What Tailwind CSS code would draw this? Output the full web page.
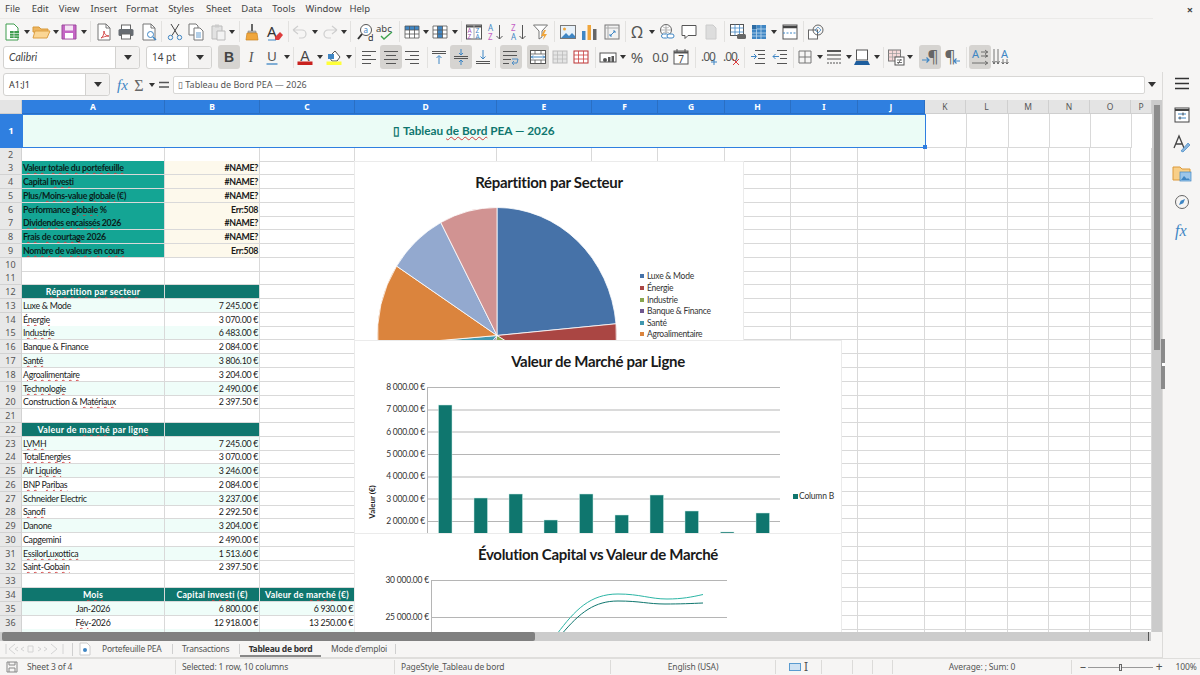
<!doctype html>
<html>
<head>
<meta charset="utf-8">
<script src="https://cdn.jsdelivr.net/npm/@tailwindcss/browser@4"></script>
</head>
<body class="w-[1200px] h-[675px] overflow-hidden bg-[#f6f5f4] text-[#333] font-['Noto_Sans',sans-serif] flex flex-col">

<div class="h-[18px] flex items-center text-[9.5px] text-[#444] relative">
  <span class="ml-[5px]">File</span><span class="ml-[11.5px]">Edit</span><span class="ml-[10px]">View</span><span class="ml-[11px]">Insert</span><span class="ml-[9px]">Format</span><span class="ml-[10px]">Styles</span><span class="ml-[12px]">Sheet</span><span class="ml-[10px]">Data</span><span class="ml-[10px]">Tools</span><span class="ml-[10px]">Window</span><span class="ml-[8px]">Help</span>
  <span class="ml-auto mr-[7px] text-[11px] font-bold leading-none">×</span>
</div>
<div id="tb1" class="h-[26px] flex items-center border-t border-[#ebeae8] mr-[47px]"></div>
<div class="h-[28px] flex items-center pb-[2px]">
  <div class="ml-[3px] w-[137px] h-[23px] flex bg-white border border-[#d3d2d0] rounded-[3px]">
    <span class="flex-1 pl-[5px] text-[10.5px] italic leading-[21px] text-[#444] font-['Lato',sans-serif]">Calibri</span>
    <span class="w-[24px] bg-[#f3f2f1] border-l border-[#d3d2d0] rounded-r-[3px] flex items-center justify-center"><i class="w-0 h-0 border-x-[4px] border-x-transparent border-t-[5px] border-t-[#333]"></i></span>
  </div>
  <div class="ml-[6px] w-[66px] h-[23px] flex bg-white border border-[#d3d2d0] rounded-[3px]">
    <span class="flex-1 pl-[5px] text-[10px] leading-[21px] text-[#444]">14 pt</span>
    <span class="w-[23px] bg-[#f3f2f1] border-l border-[#d3d2d0] rounded-r-[3px] flex items-center justify-center"><i class="w-0 h-0 border-x-[4px] border-x-transparent border-t-[5px] border-t-[#333]"></i></span>
  </div>
  <div id="tb2" class="flex items-center flex-1 h-full"></div>
</div>

<div class="flex-1 flex min-h-0">
  <div class="w-[1162px] flex flex-col">
    <div class="h-[28px] flex items-center pb-[3px]">
      <div class="ml-[3px] w-[107px] h-[23px] flex bg-white border border-[#d3d2d0] rounded-[3px]">
        <span class="flex-1 pl-[5px] text-[9px] leading-[21px] text-[#333]">A1:J1</span>
        <span class="w-[24px] bg-[#f3f2f1] border-l border-[#d3d2d0] rounded-r-[3px] flex items-center justify-center"><i class="w-0 h-0 border-x-[4px] border-x-transparent border-t-[5px] border-t-[#333]"></i></span>
      </div>
      <div id="tb3" class="flex items-center w-[63px] h-full"></div>
      <div class="w-[972px] h-[18px] bg-white border border-[#d8d7d5] rounded-[2px] pl-[4px] text-[9px] leading-[16px] text-[#555]">▯ Tableau de Bord PEA — 2026</div>
      <i class="ml-[3px] w-0 h-0 border-x-[4px] border-x-transparent border-t-[5px] border-t-[#333]"></i>
    </div>
    <div class="flex-1 flex min-h-0">
      <div id="sheet" class="w-[1152px] relative overflow-hidden bg-white font-['Lato',sans-serif] text-[#1a1a1a]">
        <div id="rows"></div>

        <div class="absolute left-[355px] top-[62px] w-[388px] h-[179px] bg-white outline-1 outline-[#ebebeb]">
          <svg id="pie" width="388" height="179" viewBox="355 162 388 179" class="block">
            <text x="549" y="188" text-anchor="middle" font-size="15" letter-spacing="-.3" font-weight="700" fill="#1a1a1a">Répartition par Secteur</text>
            <g font-size="8.500" letter-spacing="-.25" fill="#333">
              <rect x="640" y="274" width="4" height="4" fill="#4672a8"/><text x="647" y="279">Luxe &amp; Mode</text>
              <rect x="640" y="286" width="4" height="4" fill="#aa4643"/><text x="647" y="291">Énergie</text>
              <rect x="640" y="298" width="4" height="4" fill="#89a54e"/><text x="647" y="303">Industrie</text>
              <rect x="640" y="309" width="4" height="4" fill="#71588f"/><text x="647" y="314">Banque &amp; Finance</text>
              <rect x="640" y="321" width="4" height="4" fill="#4198af"/><text x="647" y="326">Santé</text>
              <rect x="640" y="332" width="4" height="4" fill="#db843d"/><text x="647" y="337">Agroalimentaire</text>
            </g>
          </svg>
        </div>

        <div class="absolute left-[355px] top-[241px] w-[486px] h-[193px] bg-white outline-1 outline-[#ebebeb]">
          <svg id="bars" width="486" height="193" viewBox="355 341 486 193" class="block">
            <text x="598" y="367" text-anchor="middle" font-size="15" letter-spacing="-.3" font-weight="700" fill="#1a1a1a">Valeur de Marché par Ligne</text>
            <g stroke="#b5b5b5" stroke-width="1">
              <path d="M427 387.5H780M427 410H780M427 432H780M427 454.5H780M427 477H780M427 499H780M427 521.5H780M427.5 387V533"/>
            </g>
            <g font-size="8.500" letter-spacing="-.2" fill="#333" text-anchor="end">
              <text x="425" y="390">8 000.00 €</text><text x="425" y="412">7 000.00 €</text><text x="425" y="435">6 000.00 €</text><text x="425" y="457">5 000.00 €</text><text x="425" y="479">4 000.00 €</text><text x="425" y="502">3 000.00 €</text><text x="425" y="524">2 000.00 €</text>
            </g>
            <text transform="translate(375 502) rotate(-90)" text-anchor="middle" font-size="8" font-weight="700" fill="#222">Valeur (€)</text>
            <rect x="793" y="494" width="5" height="5" fill="#0f766e"/>
            <text x="799" y="499" font-size="8.500" letter-spacing="-.2" fill="#333">Column B</text>
          </svg>
        </div>

        <div class="absolute left-[355px] top-[434px] w-[486px] h-[110px] bg-white outline-1 outline-[#ebebeb]">
          <svg width="486" height="110" viewBox="355 534 486 110" class="block">
            <text x="598" y="560" text-anchor="middle" font-size="15" letter-spacing="-.3" font-weight="700" fill="#1a1a1a">Évolution Capital vs Valeur de Marché</text>
            <path d="M431 580.5H727M431 617.5H727M431.5 580V640" stroke="#b5b5b5" fill="none"/>
            <g font-size="8.500" letter-spacing="-.2" fill="#333" text-anchor="end"><text x="429" y="583">30 000.00 €</text><text x="429" y="620">25 000.00 €</text></g>
            <path d="M557 634C575 610 590 594 618 594C640 594 650 599 667 599C682 599 692 597 703 594.500" fill="none" stroke="#2bb5a5" stroke-width="1"/>
            <path d="M561 635C580 612 595 601 618 601C640 601 648 604 665 604C680 604 692 603.500 703 603" fill="none" stroke="#0f766e" stroke-width="1"/>
          </svg>
        </div>
      </div>
      <div class="w-[10px] bg-[#cbcbcb] flex justify-center">
        <div class="w-[6px] mt-[5px] h-[245px] bg-[#8c8c8c]"></div>
      </div>
    </div>
    <div class="h-[9px] w-[1151px] bg-[#cccccc] flex">
      <div class="ml-[2px] w-[533px] h-full bg-[#808080] rounded-[2px]"></div>
      <div class="ml-auto mr-[2px] w-[1px] h-full bg-[#555]"></div>
    </div>
    <div class="h-[17px] flex items-center text-[8.5px] tracking-[-0.25px] text-[#555] border-b border-[#dfdedc] whitespace-nowrap">
      <svg width="62" height="14" viewBox="0 0 62 14" class="ml-[4px]" fill="none" stroke="#d4d4d4"><path d="M2 2v10M11 2L5 7l6 5M14 5l-3 2 3 2M20 5l-3 2 3 2M24 4v6h5V4zM34 5l3 2-3 2M40 5l3 2-3 2M47 2l6 5-6 5M59 2v10"/></svg>
      <span class="ml-[6px] w-[1px] h-[13px] bg-[#cfcfcf]"></span>
      <svg width="12" height="14" viewBox="0 0 12 14" class="ml-[6px]"><path d="M1 1h7l3 3v9H1z" fill="#fff" stroke="#ccc"/><circle cx="6" cy="8" r="2" fill="#3f86c4"/></svg>
      <span class="ml-[11px] w-[60px]">Portefeuille PEA</span><span class="ml-[10px] w-[1px] h-[10px] bg-[#cfcfcf]"></span>
      <span class="ml-[9px] w-[48px]">Transactions</span><span class="ml-[9px] w-[1px] h-[10px] bg-[#cfcfcf]"></span>
      <span class="w-[81px] h-full text-center font-bold text-[#333] border-b-2 border-[#888] leading-[16px]">Tableau de bord</span>
      <span class="ml-[10px] w-[55px]">Mode d'emploi</span><span class="ml-[9px] w-[1px] h-[10px] bg-[#cfcfcf]"></span>
    </div>
  </div>
  <div class="w-[38px] border-l border-[#dcdbd9] flex flex-col items-center relative">
    <div class="absolute left-[-2px] top-[267px] w-[4px] h-[50px] bg-[#8a8a8a] flex items-center justify-center"><i class="w-[3px] h-[3px] bg-white"></i></div>
    <svg width="20" height="20" viewBox="0 0 20 20" class="mt-[2px]"><path d="M3 4.500h14M3 9.500h14M3 14.500h14" stroke="#333" stroke-width="1.600"/></svg>
    <svg width="20" height="20" viewBox="0 0 20 20" class="mt-[11px]" fill="none"><rect x="3" y="3" width="14" height="14" fill="#fff" stroke="#444"/><path d="M3 5h14" stroke="#444" stroke-width="2"/><path d="M6 9h8M6 13h8" stroke="#3f86c4"/><path d="M11 7.500v3M8 11.500v3" stroke="#444"/></svg>
    <svg width="20" height="22" viewBox="0 0 20 22" class="mt-[8px]" fill="none"><path d="M2 15L7 3l5 12M4 11h6" stroke="#444" stroke-width="1.300"/><path d="M9 18l7-8 2 2-7 7z" fill="#8ab6dd" stroke="#3f86c4" stroke-width=".7"/></svg>
    <svg width="20" height="20" viewBox="0 0 20 20" class="mt-[8px]"><path d="M1 4h7l2 2h8v11H1z" fill="#f8cf88" stroke="#dc9a3b"/><rect x="8" y="9" width="11" height="9" fill="#9cc6ea" stroke="#3f86c4" stroke-width=".7"/><path d="M9 17l3-4 3 3 1-1 2 2z" fill="#3f86c4"/></svg>
    <svg width="20" height="20" viewBox="0 0 20 20" class="mt-[9px]" fill="none"><circle cx="10" cy="10" r="6.500" stroke="#666"/><path d="M13 7L11.300 11.300 7 13 8.700 8.700z" fill="#3f86c4"/></svg>
    <svg width="20" height="22" viewBox="0 0 20 22" class="mt-[8px]"><text x="3" y="16" font-size="16" font-style="italic" font-family="Liberation Serif" fill="#3f86c4">fx</text></svg>
  </div>
</div>

<div class="h-[17px] flex items-center text-[8.5px] tracking-[-0.15px] text-[#555] border-t border-[#dfdedc]">
  <svg width="12" height="12" viewBox="0 0 12 12" class="ml-[6px]" fill="none" stroke="#888"><path d="M1 1h10v10H1zM3 1v3h6V1M3 11V7h6v4"/></svg>
  <span class="ml-[9px] w-[148px]">Sheet 3 of 4</span>
  <span class="w-[1px] h-[14px] bg-[#dcdbd9]"></span><span class="ml-[6px] w-[212px]">Selected: 1 row, 10 columns</span>
  <span class="w-[1px] h-[14px] bg-[#dcdbd9]"></span><span class="ml-[6px] w-[209px]">PageStyle_Tableau de bord</span>
  <span class="w-[1px] h-[14px] bg-[#dcdbd9]"></span><span class="w-[164px] text-center">English (USA)</span>
  <span class="w-[1px] h-[14px] bg-[#dcdbd9]"></span>
  <span class="w-[45px] flex items-center justify-center"><span class="w-[12px] h-[8px] bg-[#cfe2f3] border border-[#5a9bd0]"></span><span class="ml-[3px] text-[12px] leading-none">I</span></span>
  <span class="w-[1px] h-[14px] bg-[#dcdbd9]"></span><span class="w-[30px]"></span>
  <span class="w-[1px] h-[14px] bg-[#dcdbd9]"></span><span class="w-[19px]"></span>
  <span class="w-[1px] h-[14px] bg-[#dcdbd9]"></span><span class="w-[19px]"></span>
  <span class="w-[1px] h-[14px] bg-[#dcdbd9]"></span><span class="w-[178px] text-center">Average: ; Sum: 0</span>
  <span class="w-[1px] h-[14px] bg-[#dcdbd9]"></span>
  <span class="ml-[8px] text-[12px] leading-none">–</span>
  <span class="ml-[2px] w-[65px] h-[1px] bg-[#999] flex items-center justify-center"><i class="w-[3px] h-[7px] bg-[#eee] border border-[#666]"></i></span>
  <span class="ml-[3px] text-[12px] leading-none">+</span>
  <span class="ml-[13px]">100%</span>
</div>

<script>
const g = (body, w = 18, h = 18) => `<svg width="${w}" height="${h}" viewBox="0 0 18 18" fill="none" class="overflow-visible">${body}</svg>`
const doc = '<path d="M3 1h8l4 4v12H3z" fill="#fff" stroke="#777"/><path d="M11 1v4h4" stroke="#777"/>'
const hlines = (ys, x1, x2, c = '#555') => ys.map(y => `<path d="M${x1} ${y}.5H${x2}" stroke="${c}"/>`).join('')
const grid = '<path d="M2 3h14v12H2zM2 7h14M2 11h14M6.500 3v12M11.500 3v12" stroke="#555" stroke-width=".8"/>'

const icons = {
  new: '<path d="M3 1h8l4 4v12H3z" fill="#fff" stroke="#3f9d4f"/><path d="M7 8h9v7H7z" fill="#3f9d4f"/><path d="M7 10.500h9M7 13h9M11 8v7" stroke="#fff" stroke-width=".6"/>',
  open: '<path d="M1 4h6l2 2h7v3H1z" fill="#edb55f" stroke="#d99a3a"/><path d="M1 15l2-7h15l-3 7z" fill="#fbd694" stroke="#dc9f43"/>',
  save: '<path d="M2 2h14v14H2z" fill="#c566c5" stroke="#9c4a9c"/><rect x="5" y="2.500" width="8" height="5" fill="#f4e4f4"/><rect x="5" y="10" width="8" height="5.500" fill="#fff"/>',
  pdf: doc + '<path d="M6 15c2-1 3-4 3-7 0 3 2 5 5 5-3 0-6 1-8 2z" stroke="#d04040" stroke-width=".9"/>',
  print: '<rect x="4.500" y="2" width="9" height="5" fill="#fff" stroke="#666"/><rect x="1.500" y="6" width="15" height="7" rx="1.500" fill="#676c72"/><rect x="4.500" y="11" width="9" height="5" fill="#fff" stroke="#666"/>',
  preview: doc + '<circle cx="10.500" cy="11.500" r="3" fill="#fff" stroke="#3f86c4"/><path d="M13 14l3 3" stroke="#3f86c4" stroke-width="1.500"/>',
  cut: '<circle cx="4.500" cy="14.500" r="2.200" stroke="#3f86c4"/><circle cx="13.500" cy="14.500" r="2.200" stroke="#3f86c4"/><path d="M6 12.500L13 1M12 12.500L5 1" stroke="#444"/>',
  copy: '<path d="M2 1h7l2 2v9H2z" fill="#fff" stroke="#777"/><path d="M7 5h6l3 3v9H7z" fill="#fff" stroke="#777"/><path d="M9 10h5M9 12h5M9 14h5" stroke="#3f86c4" stroke-width=".8"/>',
  paste: '<path d="M3 3h10v13H3z" fill="#e2e2e2" stroke="#bbb"/><rect x="6" y="1.500" width="4" height="3" fill="#ccc"/><path d="M8 8h8v9H8z" fill="#f3f3f3" stroke="#bbb"/>',
  clone: '<path d="M8 1h2v7H8z" fill="#666"/><path d="M5 8h8v2H5z" fill="#bbb" stroke="#777" stroke-width=".5"/><path d="M4 10h10l1 7H3z" fill="#f0a63c" stroke="#c9821e" stroke-width=".7"/>',
  clear: '<text x="1" y="14" font-size="15" fill="#333" font-family="Noto Sans">A</text><path d="M9 14l5-5 3 3-4 5H9z" fill="#dd3c3c"/><path d="M2 17h8" stroke="#3f86c4"/>',
  undo: '<path d="M2 7l5-4M2 7l5 4M2 7h9a4 4 0 0 1 0 8H8" stroke="#cfcfcf" stroke-width="1.200"/>',
  redo: '<path d="M16 7l-5-4M16 7l-5 4M16 7H7a4 4 0 0 0 0 8h3" stroke="#cfcfcf" stroke-width="1.200"/>',
  find: '<circle cx="10" cy="7" r="5.500" fill="#fff" stroke="#555"/><path d="M6 11l-4 5" stroke="#333" stroke-width="2"/><text x="7.500" y="9.500" font-size="8" fill="#3f86c4">a</text><text x="12" y="17.500" font-size="9" fill="#333">d</text>',
  spell: '<text x="0" y="9" font-size="9.500" fill="#444">abc</text><path d="M5 13l3 3 8-7" stroke="#3fa34d" stroke-width="1.400"/>',
  trow: '<rect x="2" y="3" width="14" height="12" fill="#fff"/><rect x="2" y="3" width="14" height="4" fill="#3f86c4"/>' + grid,
  tcol: '<rect x="2" y="3" width="14" height="12" fill="#fff"/><rect x="6.500" y="3" width="5" height="12" fill="#3f86c4"/>' + grid,
  sort: '<rect x="1.500" y="2" width="15" height="14" fill="#fff" stroke="#555"/><path d="M1.500 3.500h15" stroke="#555" stroke-width="2"/><path d="M9 2v14" stroke="#aaa"/><text x="2.500" y="10" font-size="6.500" fill="#a355b5">A</text><text x="2.500" y="15.500" font-size="6.500" fill="#a355b5">Z</text><text x="10.500" y="10" font-size="6.500" fill="#3f86c4">Z</text><text x="10.500" y="15.500" font-size="6.500" fill="#3f86c4">A</text>',
  asc: '<text x="1" y="8" font-size="8" fill="#3f86c4">A</text><text x="1" y="16.500" font-size="8" fill="#c45fc4">Z</text><path d="M12.500 2v14M9.500 13l3 3 3-3" stroke="#555"/>',
  desc: '<text x="1" y="8" font-size="8" fill="#c45fc4">Z</text><text x="1" y="16.500" font-size="8" fill="#3f86c4">A</text><path d="M12.500 2v14M9.500 13l3 3 3-3" stroke="#555"/>',
  filter: '<path d="M1.500 2h14l-5.500 6v6l-3 2V8z" fill="#fff" stroke="#777"/><path d="M12 7l-3 6h3l-1 4 4-6h-3l2-4z" fill="#f0a63c"/>',
  image: '<rect x="1.500" y="2.500" width="15" height="13" fill="#e7f1fa" stroke="#777"/><circle cx="5.500" cy="6" r="1.500" fill="#f0a63c"/><path d="M2 15l5-5 3 3 3-3 3 3v2z" fill="#3f86c4"/>',
  chart: '<rect x="2" y="8" width="3.500" height="9" fill="#3f86c4"/><rect x="7.500" y="2" width="3.500" height="15" fill="#f0a63c"/><rect x="13" y="6" width="3.500" height="11" fill="#666"/>',
  pivot: '<rect x="2" y="2" width="14" height="14" fill="#f2f2f2" stroke="#777"/><path d="M2 5h14M5 2v14" stroke="#aaa"/><path d="M7 13l5-5M10 8h2v2M7 11v2h2" stroke="#3f86c4"/>',
  omega: '<text x="9" y="15" text-anchor="middle" font-size="16" fill="#555" font-family="Noto Sans">Ω</text>',
  link: '<circle cx="8" cy="7" r="5.500" fill="#fff" stroke="#666"/><path d="M2.500 7h11M8 1.500v11M4.500 3.500c2 2 5 2 7 0M4.500 10.500c2-2 5-2 7 0" stroke="#888" stroke-width=".6"/><rect x="3.500" y="11" width="7" height="4" rx="2" fill="#fff" stroke="#3f86c4"/><rect x="9" y="11" width="7" height="4" rx="2" fill="#fff" stroke="#3f86c4"/>',
  comment: '<path d="M2 2.500h14v10H8l-3 3v-3H2z" fill="#fff" stroke="#555"/>',
  page: '<path d="M4 2h7l3 3v11H4z" fill="#ddd" stroke="#ccc"/>',
  area: '<rect x="1.500" y="1.500" width="13" height="11" fill="#fff" stroke="#555"/><path d="M1.500 5h13M1.500 9h13M6 1.500v11M10.500 1.500v11" stroke="#3f86c4" stroke-width=".8"/><rect x="8" y="11" width="9" height="5" rx="1.500" fill="#666"/>',
  freeze: '<rect x="2" y="2" width="14" height="14" fill="#3f86c4"/><path d="M2 6h14M2 10h14M2 13h14M6.500 2v14M11 2v14" stroke="#bcd8ef" stroke-width=".8"/><path d="M2 2h4.500v4H2z" fill="#2c6ba3"/>',
  split: '<rect x="2" y="2" width="14" height="14" fill="#fff" stroke="#555"/><path d="M2 4h14" stroke="#444" stroke-width="2.500"/><path d="M2 10h14" stroke="#3f86c4" stroke-dasharray="2 1.500"/>',
  shapes: '<rect x="1.500" y="7" width="9" height="9" fill="#fff" stroke="#666"/><circle cx="11" cy="7" r="5" stroke="#666"/><path d="M11 4l3 3-3 3-3-3z" stroke="#3f86c4" stroke-width=".7"/>',

  bold: '<text x="9" y="14" text-anchor="middle" font-size="14" fill="#444" font-family="Liberation Sans" font-weight="700">B</text>',
  ital: '<text x="9" y="14" text-anchor="middle" font-size="14" fill="#555" font-style="italic" font-family="Liberation Serif">I</text>',
  under: '<text x="9" y="13" text-anchor="middle" font-size="13" fill="#555" font-family="Liberation Sans">U</text><path d="M3.500 16h11" stroke="#3f86c4" stroke-width="1.300"/>',
  color: '<text x="9" y="12.500" text-anchor="middle" font-size="14" fill="#444" font-family="Liberation Sans">A</text><rect x="1.500" y="13.500" width="15" height="3.500" fill="#c9211e"/>',
  hi: '<path d="M4 9l6-6 5 6-3 4H7z" fill="#fff" stroke="#555"/><path d="M3 6h6v5H3z" fill="#3f86c4"/><rect x="1.500" y="13.500" width="15" height="3.500" fill="#ffff38"/>',
  al: hlines([3, 11], 2, 16) + hlines([7, 15], 2, 11),
  ac: hlines([3, 11], 2, 16) + hlines([7, 15], 4, 14),
  ar: hlines([3, 11], 2, 16) + hlines([7, 15], 7, 16),
  vt: hlines([3, 5], 2, 16) + '<path d="M9 16V8M6.500 10L9 7.500l2.500 2.500" stroke="#3f86c4"/>',
  vc: hlines([8, 10], 2, 16) + '<path d="M9 1v6M7 5l2 2 2-2M9 17v-5M7 14l2-2 2 2" stroke="#3f86c4"/>',
  vb: hlines([13, 15], 2, 16) + '<path d="M9 2v9M6.500 8.500L9 11l2.500-2.500" stroke="#3f86c4"/>',
  wrap: hlines([3, 7], 1, 15) + hlines([11], 1, 9) + hlines([15], 1, 7) + '<path d="M10 11h6l-1 4h-4M12 13l-2 2 2 2" stroke="#3f86c4" stroke-width=".9"/>',
  merge: '<rect x="1.500" y="2.500" width="15" height="13" fill="#fff" stroke="#555"/><path d="M1.500 6h15M1.500 12h15M6 2.500V6M12 2.500V6M6 12v3.500M12 12v3.500" stroke="#555" stroke-width=".8"/><path d="M2 9h14M4 7.500L2.500 9 4 10.500M14 7.500L15.500 9 14 10.500" stroke="#3f86c4"/>',
  mergeg: '<rect x="2" y="3" width="14" height="12" fill="#e5e5e5" stroke="#bbb"/><path d="M2 7h14M2 11h14M6.500 3v12M11.500 3v12" stroke="#bbb" stroke-width=".8"/>',
  unmerge: '<rect x="2" y="3" width="14" height="12" fill="#fff" stroke="#b33"/><path d="M2 7h14M2 11h14M6.500 3v12M11.500 3v12" stroke="#c44" stroke-width=".8"/>',
  curr: '<rect x="1" y="5" width="16" height="9" fill="#fff" stroke="#555"/><circle cx="6" cy="12" r="2" fill="#555"/><rect x="9" y="9" width="2.500" height="5" fill="#555"/><rect x="12.500" y="8" width="2.500" height="6" fill="#555"/>',
  pct: '<text x="9" y="14.500" text-anchor="middle" font-size="15" fill="#555" font-family="Noto Sans">%</text>',
  num: '<text x="9" y="14" text-anchor="middle" font-size="13" fill="#555" font-family="Noto Sans" letter-spacing="-1">0.0</text>',
  date: '<rect x="2" y="3" width="14" height="13" fill="#fff" stroke="#555"/><path d="M2 4.500h14" stroke="#555" stroke-width="2"/><path d="M5 1v3M13 1v3" stroke="#555"/><text x="9" y="14.500" text-anchor="middle" font-size="10" fill="#444">7</text>',
  addd: '<text x="8" y="13" text-anchor="middle" font-size="12" fill="#555" letter-spacing="-1" font-family="Noto Sans">.00</text><path d="M14 11v6M11 14h6" stroke="#3f86c4"/>',
  deld: '<text x="8" y="13" text-anchor="middle" font-size="12" fill="#555" letter-spacing="-1" font-family="Noto Sans">.00</text><path d="M11 11l6 6M17 11l-6 6" stroke="#dd3c3c"/>',
  ind: hlines([2, 15], 6, 16) + hlines([6, 10], 9, 16) + '<path d="M2 8.500h5M5 6l2.500 2.500L5 11" stroke="#3f86c4"/>',
  oud: hlines([2, 15], 6, 16) + hlines([6, 10], 9, 16) + '<path d="M8 8.500H2M4.500 6L2 8.500 4.500 11" stroke="#3f86c4"/>',
  border: '<path d="M3 3h12v12H3zM9 3v12M3 9h12" stroke="#777"/>',
  line: '<path d="M2 3h14" stroke="#555" stroke-width="2"/><path d="M2 7h14" stroke="#555" stroke-width="1.300"/><path d="M2 11h14" stroke="#555"/><path d="M2 15h14" stroke="#555" stroke-dasharray="2 1"/>',
  bcol: '<rect x="3.500" y="2" width="11" height="10" fill="#fff" stroke="#555"/><path d="M1 17l2-4h12l2 4z" fill="#1e5e9e"/>',
  cond: '<rect x="1.500" y="2" width="12" height="11" fill="#f6d9d9" stroke="#777"/><path d="M1.500 5.500h12M1.500 9h12M5.500 2v11M9.500 2v11" stroke="#999" stroke-width=".7"/><rect x="8" y="9" width="9" height="8" fill="#fff" stroke="#555"/><path d="M10 12h5M10 14.500h5M14 11l-3 5" stroke="#555" stroke-width=".8"/>',
  ltr: '<text x="12" y="14" text-anchor="middle" font-size="17" fill="#666" font-family="Noto Sans">¶</text><path d="M1 12h7M5.500 9.500L8 12l-2.500 2.500" stroke="#3f86c4" stroke-width="1.200"/>',
  rtl: '<text x="7" y="14" text-anchor="middle" font-size="17" fill="#666" font-family="Noto Sans">¶</text><path d="M17 13h-6M13.500 10.500L11 13l2.500 2.500" stroke="#3f86c4" stroke-width="1.200"/>',
  hor: '<text x="1" y="10" font-size="11" fill="#3f86c4" font-family="Noto Sans">A</text><path d="M10 4h7M14 2l2.500 2L14 6M10 8h7M14 6.500L16.500 8 14 9.500M1 15h16M14 13l2.500 2-2.500 2" stroke="#555" stroke-width=".8"/>',
  ver: '<text x="9" y="10" font-size="11" fill="#3f86c4" font-family="Noto Sans">A</text><path d="M2 1v15M0.500 13L2 16l1.500-3M6 1v15M4.500 13L6 16l1.500-3M11 11v5M9.500 14L11 16l1.500-2M15 11v5M13.500 14L15 16l1.500-2" stroke="#555" stroke-width=".8"/>',
  fx: '<text x="2" y="14" font-size="15" font-style="italic" font-family="Liberation Serif" fill="#3f86c4">fx</text>',
  sum: '<text x="9" y="15" text-anchor="middle" font-size="16" fill="#666" font-family="Liberation Serif">Σ</text>',
  eq: '<path d="M4 6.500h10M4 11h10" stroke="#555" stroke-width="1.600"/>'
}

// [icon name, centre x]; 'dd' is the small arrow, 'sep' a divider, a third value marks the pressed state
function renderBar(el, items, start) {
  let right = start
  el.innerHTML = items.map(([name, cx, on]) => {
    let html = ''
    let w = 20
    if (name == 'dd') {
      w = 7
      html = `<i class="w-0 h-0 border-x-[3.5px] border-x-transparent border-t-[4px] border-t-[#333]"></i>`
    } else if (name == 'sep') {
      w = 1
      html = `<i class="w-[1px] h-[21px] bg-[#e2e1df]"></i>`
    } else {
      w = on ? 22 : 20
      html = `<span class="${on ? 'w-[22px] h-[24px] rounded-[3px] bg-[#d6d4d1] flex items-center justify-center shrink-0' : 'w-[20px] flex items-center justify-center shrink-0'}">${g(icons[name])}</span>`
    }
    const gap = cx - w / 2 - right
    right = cx + w / 2
    return `<span class="flex shrink-0" style="margin-left:${gap}px">${html}</span>`
  }).join('')
}

renderBar(tb1, [['new',12],['dd',27],['open',42],['dd',57],['save',71],['dd',86],['sep',93],['pdf',107],['print',129],['preview',152],['sep',164],['cut',178],['copy',199],['paste',221],['dd',235],['sep',243],['clone',256],['clear',279],['sep',292],['undo',304],['dd',319],['redo',335],['dd',349],['sep',356],['find',371],['spell',391],['sep',405],['trow',418],['dd',432],['tcol',447],['dd',462],['sep',469],['sort',482],['asc',504],['desc',527],['filter',549],['sep',562],['image',576],['chart',597],['pivot',620],['sep',633],['omega',645],['dd',660],['link',676],['comment',698],['page',720],['sep',733],['area',747],['freeze',768],['dd',783],['split',800],['sep',813],['shapes',826]], 0)

renderBar(tb2, [['bold',229,1],['ital',251],['under',272],['dd',287],['sep',294],['color',306],['dd',321],['hi',336],['dd',351],['sep',358],['al',372],['ac',394,1],['ar',415],['sep',430],['vt',442],['vc',464,1],['vb',486],['sep',498],['wrap',514,1],['merge',541,1],['mergeg',563],['unmerge',584],['sep',598],['curr',611],['dd',626],['pct',641],['num',664],['date',685],['sep',699],['addd',713],['deld',735],['sep',748],['ind',762],['oud',784],['sep',797],['border',809],['dd',824],['line',839],['dd',854],['bcol',868],['dd',883],['sep',890],['cond',903],['dd',917],['sep',928],['ltr',938,1],['rtl',960],['sep',974],['hor',988,1],['ver',1009]], 212)

renderBar(tb3, [['fx',124],['sum',139],['dd',152],['eq',165]], 110)

// sheet
const cols = ['A','B','C','D','E','F','G','H','I','J','K','L','M','N','O','P']
const rowCls = 'grid grid-cols-[22px_143px_95px_95px_142px_95px_66px_67px_66px_67px_67px_41px_42px_41px_41px_41px_21px]'
const base = 'border-r border-b border-[#d9d9d9] px-[1px] overflow-hidden whitespace-nowrap text-[8.8px] tracking-[-0.3px] leading-[13px]'

// {word} gets the spell check squiggle
const sq = s => s.replace(/\{(.+?)\}/g, '<span class="underline decoration-wavy decoration-[#d23c3c] decoration-[0.7px] underline-offset-[1px]">$1</span>')

let html = `<div class="${rowCls} h-[14px]"><div class="bg-[#e4e4e4] border-r border-b border-[#cfcfcf]"></div>` + cols.map((c, i) =>
  `<div class="${i < 10 ? 'bg-[#2f7fe0] text-white border-[#2a6fc4] font-bold' : 'bg-[#e4e4e4] text-[#555] border-[#cfcfcf]'} border-r border-b text-center text-[8.5px] leading-[13px] font-['Noto_Sans']">${c}</div>`).join('') + '</div>'

html += `<div class="flex h-[33.5px]"><div class="w-[22px] bg-[#2f7fe0] text-white font-bold text-[9.5px] flex items-center justify-center font-['Noto_Sans']">1</div>
  <div class="w-[904px] bg-[#ebfcf6] border border-[#2f7fe0] relative flex items-center justify-center font-bold text-[11.8px] text-[#0f766e]"><span>▯ Tableau ${sq('{de Bord}')} PEA — 2026</span><i class="absolute right-[-2px] bottom-[-2px] w-[4px] h-[4px] bg-[#2f7fe0]"></i></div>
  <div class="flex-1 flex"><div class="w-[41px] border-r border-b border-[#d9d9d9]"></div><div class="w-[42px] border-r border-b border-[#d9d9d9]"></div><div class="w-[41px] border-r border-b border-[#d9d9d9]"></div><div class="w-[41px] border-r border-b border-[#d9d9d9]"></div><div class="w-[41px] border-r border-b border-[#d9d9d9]"></div></div></div>`

const kpi = [['{Valeur} {totale} {du} {portefeuille}','#NAME?'],['Capital {investi}','#NAME?'],['Plus/{Moins-value} {globale} (€)','#NAME?'],['Performance {globale} %','Err:508'],['{Dividendes} {encaissés} 2026','#NAME?'],['{Frais} {de} {courtage} 2026','#NAME?'],['{Nombre} {de} {valeurs} {en} {cours}','Err:508']]
const sect = [['Luxe &amp; Mode','7 245.00 €'],['{Énergie}','3 070.00 €'],['{Industrie}','6 483.00 €'],['Banque &amp; Finance','2 084.00 €'],['{Santé}','3 806.10 €'],['{Agroalimentaire}','3 204.00 €'],['{Technologie}','2 490.00 €'],['Construction &amp; {Matériaux}','2 397.50 €']]
const lines = [['{LVMH}','7 245.00 €'],['{TotalEnergies}','3 070.00 €'],['Air {Liquide}','3 246.00 €'],['{BNP} {Paribas}','2 084.00 €'],['Schneider Electric','3 237.00 €'],['{Sanofi}','2 292.50 €'],['Danone','3 204.00 €'],['Capgemini','2 490.00 €'],['{EssilorLuxottica}','1 513.60 €'],['{Saint-Gobain}','2 397.50 €']]

const rows = {}
kpi.forEach((r, i) => rows[3 + i] = [[r[0], 'bg-[#14a594] font-bold text-[#0a1f1c]'], [r[1], 'bg-[#fdf9ec] text-right font-bold']])
rows[12] = [['{Répartition} {par} {secteur}', 'bg-[#0f766e] text-white font-bold text-center tracking-[0.2px]'], ['', 'bg-[#0f766e]']]
sect.forEach((r, i) => rows[13 + i] = [[r[0], i % 2 ? '' : 'bg-[#effdf9]'], [r[1], (i % 2 ? '' : 'bg-[#effdf9] ') + 'text-right']])
rows[22] = [['Valeur de {marché} par {ligne}', 'bg-[#0f766e] text-white font-bold text-center tracking-[0.3px]'], ['', 'bg-[#0f766e]']]
lines.forEach((r, i) => rows[23 + i] = [[r[0], i % 2 ? '' : 'bg-[#effdf9]'], [r[1], (i % 2 ? '' : 'bg-[#effdf9] ') + 'text-right']])
const hd = 'bg-[#0f766e] text-white font-bold text-center border-[#cfe9e4] tracking-[0.2px]'
rows[34] = [['{Mois}', hd], ['Capital {investi} (€)', hd], ['Valeur de {marché} (€)', hd]]
rows[35] = [['Jan-2026', 'bg-[#effdf9] text-center'], ['6 800.00 €', 'bg-[#effdf9] text-right'], ['6 930.00 €', 'bg-[#effdf9] text-right']]
rows[36] = [['{Fév}-2026', 'text-center'], ['12 918.00 €', 'text-right'], ['13 250.00 €', 'text-right']]
rows[37] = [['', 'bg-[#effdf9]'], ['', 'bg-[#effdf9]'], ['', 'bg-[#effdf9]']]

for (let n = 2; n <= 38; n++) {
  const r = rows[n] || []
  html += `<div class="${rowCls} h-[13.77px]"><div class="bg-[#e8e8e8] border-r border-b border-[#d2d2d2] text-center text-[9px] leading-[13px] text-[#555] font-['Noto_Sans']">${n}</div>`
  html += cols.map((c, i) => `<div class="${base} ${r[i] ? r[i][1] : ''}">${r[i] ? sq(r[i][0]) : ''}</div>`).join('')
  html += '</div>'
}
document.getElementById('rows').innerHTML = html

// pie: ellipse because the chart frame is stretched
const vals = [7245, 3070, 6483, 2084, 3806.1, 3204, 2490, 2397.5]
const fills = ['#4672a8', '#aa4643', '#89a54e', '#71588f', '#4198af', '#db843d', '#93a9cf', '#d19392']
const total = vals.reduce((a, b) => a + b)
const [cx, cy, rx, ry] = [497, 335.5, 119.5, 128]
let angle = 0
const pt = a => `${(cx + rx * Math.sin(a)).toFixed(1)} ${(cy - ry * Math.cos(a)).toFixed(1)}`
document.getElementById('pie').insertAdjacentHTML('beforeend', vals.map((v, i) => {
  const next = angle + v / total * Math.PI * 2
  const d = `M${cx} ${cy}L${pt(angle)}A${rx} ${ry} 0 ${next - angle > Math.PI ? 1 : 0} 1 ${pt(next)}Z`
  angle = next
  return `<path d="${d}" fill="${fills[i]}" stroke="#fff" stroke-width=".8"/>`
}).join(''))

const bars = [[438.5, 405], [474, 498], [509, 494], [544, 520], [579.5, 494], [615, 515], [650, 495], [685, 511], [720.5, 532], [756, 513]]
document.getElementById('bars').insertAdjacentHTML('beforeend', bars.map(([x, y]) =>
  `<rect x="${x}" y="${y}" width="13.500" height="${534 - y}" fill="#0f766e" stroke="#c9ece6" stroke-width=".5"/>`).join(''))
</script>
</body>
</html>
